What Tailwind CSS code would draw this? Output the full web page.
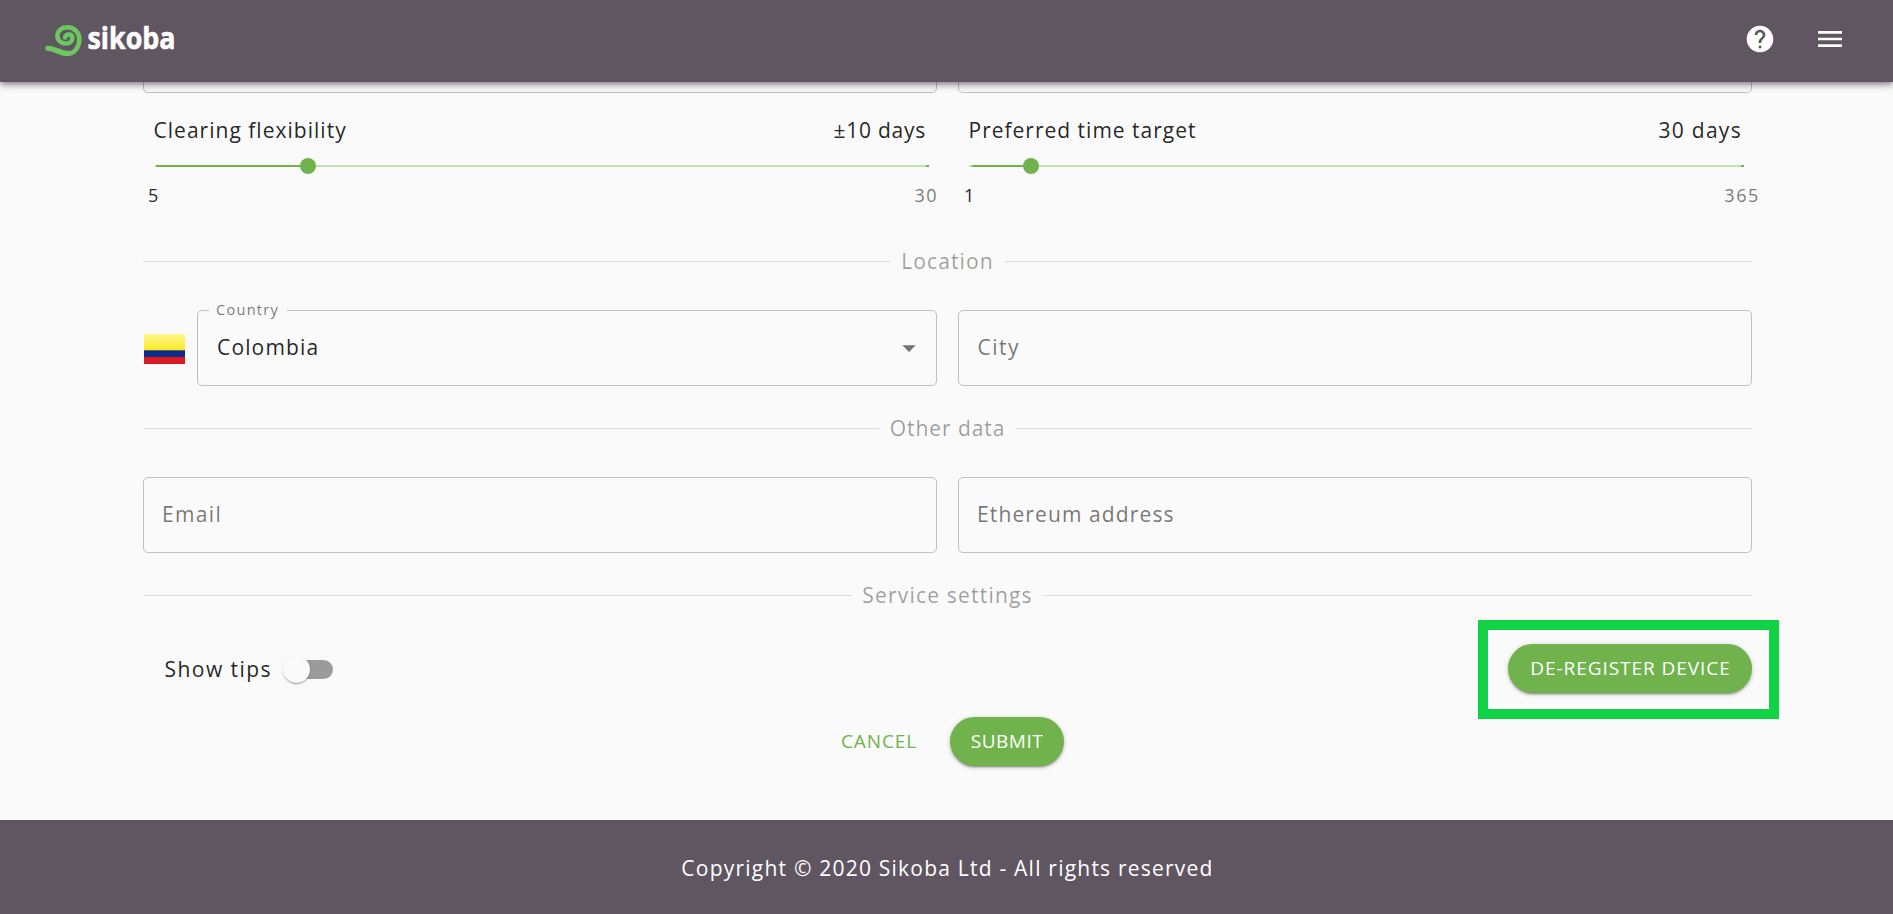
<!DOCTYPE html>
<html lang="en">
<head>
<meta charset="utf-8">
<title>Sikoba</title>
<script src="https://cdn.jsdelivr.net/npm/@tailwindcss/browser@4"></script>
</head>
<body class="bg-[#fafafa] font-['Open_Sans',sans-serif] text-[21px] leading-[30px] text-black/87 h-[914px] overflow-hidden flex flex-col whitespace-nowrap">

<header class="relative z-10 h-[82px] shrink-0 bg-[#605662] flex items-center justify-between pl-[44px] pr-[47px] shadow-[0_2px_4px_-1px_rgba(0,0,0,.2),0_4px_5px_0_rgba(0,0,0,.14),0_1px_10px_0_rgba(0,0,0,.3)]">
  <svg class="w-[150px] h-[50px] overflow-visible" viewBox="44 16 150 50">
    <path fill="none" stroke="#6dc75f" stroke-width="4.5" stroke-linecap="round" stroke-linejoin="round" d="M48 48.5C54 47.5 60 53.8 67.5 53.8C75 53.8 79.4 46 79.4 39.5C79.4 32 74 27.2 67.5 27.2C61 27.2 57.4 31.5 57.4 36C57.4 40.5 61.5 43.6 66 43.6C70 43.6 72.4 40.8 72.4 38C72.4 35.5 70.5 34.6 68.6 34.6C66.5 34.6 65 36 65.2 37.6"/>
    <path fill="none" stroke="#6dc75f" stroke-width="5.4" stroke-linecap="round" d="M48 48.4C54 47.8 60 53.4 67.5 53.4"/>
    <text x="87.5" y="49.4" fill="#fff" stroke="#fff" stroke-width=".6" stroke-linejoin="round" font-family="Open Sans, sans-serif" font-weight="700" font-size="31" textLength="88" lengthAdjust="spacingAndGlyphs">sikoba</text>
  </svg>
  <div class="flex items-center gap-[38px] -mt-1 text-white">
    <svg class="w-8 h-8" viewBox="0 0 24 24" fill="currentColor"><path d="M12 2C6.48 2 2 6.48 2 12s4.48 10 10 10 10-4.48 10-10S17.52 2 12 2zm1 17h-2v-2h2v2zm2.07-7.75l-.9.92C13.45 12.9 13 13.5 13 15h-2v-.5c0-1.1.45-2.1 1.17-2.83l1.24-1.26c.37-.36.59-.86.59-1.41 0-1.1-.9-2-2-2s-2 .9-2 2H8c0-2.21 1.79-4 4-4s4 1.79 4 4c0 .88-.36 1.68-.93 2.25z"/></svg>
    <svg class="w-8 h-8" viewBox="0 0 24 24" fill="currentColor"><path d="M3 18h18v-2H3v2zm0-5h18v-2H3v2zm0-7v2h18V6H3z"/></svg>
  </div>
</header>

<main class="flex-1 flex flex-col pl-[143px] pr-[141px]">
  <div class="grid grid-cols-2 gap-[21px]">
    <div class="h-[11px] border border-t-0 border-black/23 rounded-b-[5px]"></div>
    <div class="h-[11px] border border-t-0 border-black/23 rounded-b-[5px]"></div>
  </div>

  <div class="grid grid-cols-2 gap-[21px] mt-[22px]">
    <section>
      <div class="flex justify-between pl-[10.5px] pr-[11px]"><span class="tracking-[1.02px]">Clearing flexibility</span><span class="tracking-[.75px]">±10 days</span></div>
      <div class="mt-5 ml-[11.5px] mr-2 h-0.5 bg-[#c6e0b6] flex items-center">
        <div class="w-[145px] ml-[1.5px] h-0.5 shrink-0 bg-[#70b34d]"></div>
        <div class="size-4 -ml-px rounded-full shrink-0 bg-[#70b34d]"></div>
        <div class="ml-auto w-[3px] h-0.5 bg-[#70b34d]"></div>
      </div>
      <div class="mt-[15px] h-[26px] leading-[26px] text-[18px] flex justify-between pl-[5px] tracking-[1.5px]"><span>5</span><span class="text-black/54 -mr-px">30</span></div>
    </section>
    <section>
      <div class="flex justify-between pl-[10.5px] pr-[10px]"><span class="tracking-[1px]">Preferred time target</span><span class="tracking-[1.3px]">30 days</span></div>
      <div class="mt-5 ml-[11px] mr-2 h-0.5 bg-[#c6e0b6] flex items-center">
        <div class="w-[52px] ml-[3px] h-0.5 shrink-0 bg-[#70b34d]"></div>
        <div class="size-4 -ml-px rounded-full shrink-0 bg-[#70b34d]"></div>
        <div class="ml-auto w-[3px] h-0.5 bg-[#70b34d]"></div>
      </div>
      <div class="mt-[15px] h-[26px] leading-[26px] text-[18px] flex justify-between pl-[6px] tracking-[1.6px]"><span>1</span><span class="text-black/54 -mr-2">365</span></div>
    </section>
  </div>

  <div class="mt-[38px] flex items-center gap-[11px] text-black/38"><i class="h-px flex-1 bg-black/12"></i><span class="tracking-[1.1px]">Location</span><i class="h-px flex-1 bg-black/12"></i></div>

  <div class="mt-[34px] grid grid-cols-2 gap-[21px]">
    <div class="flex items-center">
      <svg class="w-[43px] h-[33px] mr-[11px] mt-[3px] shrink-0" viewBox="0 0 43 33">
        <defs><linearGradient id="y" x1="0" y1="0" x2="0" y2="1"><stop offset="0" stop-color="#fff68c"/><stop offset=".5" stop-color="#fff15c"/><stop offset="1" stop-color="#f9e616"/></linearGradient></defs>
        <rect x="1" y="1" width="41" height="17" fill="url(#y)"/>
        <rect x="1" y="17.3" width="41" height="7" fill="#0a2c8c"/>
        <rect x="1" y="24" width="41" height="7" fill="#dc1a1f"/>
      </svg>
      <div class="relative flex-1 h-[76px] border border-black/23 rounded-[5px] flex items-center justify-between pl-[19px] pr-[11px] pb-[2px]">
        <span class="absolute -top-px left-[11px] h-px w-[78px] bg-[#fafafa]"></span>
        <span class="absolute left-[18px] -top-[13px] text-[14.5px] leading-[24px] tracking-[1.3px] text-black/54">Country</span>
        <span class="tracking-[1.15px]">Colombia</span>
        <svg class="w-8 h-8 mt-px text-black/54" viewBox="0 0 24 24" fill="currentColor"><path d="M7 10l5 5 5-5z"/></svg>
      </div>
    </div>
    <div class="h-[76px] border border-black/23 rounded-[5px] flex items-center pl-[18.5px] pb-[2px] text-black/54"><span class="tracking-[1.5px]">City</span></div>
  </div>

  <div class="mt-[27px] flex items-center gap-[11px] text-black/38"><i class="h-px flex-1 bg-black/12"></i><span class="tracking-[.95px]">Other data</span><i class="h-px flex-1 bg-black/12"></i></div>

  <div class="mt-[34px] grid grid-cols-2 gap-[21px] text-black/54">
    <div class="h-[76px] border border-black/23 rounded-[5px] flex items-center pl-[18px] pb-[2px]"><span class="tracking-[1.35px]">Email</span></div>
    <div class="h-[76px] border border-black/23 rounded-[5px] flex items-center pl-[18px] pb-[2px]"><span class="tracking-[1.12px]">Ethereum address</span></div>
  </div>

  <div class="mt-[27px] flex items-center gap-[10px] text-black/38"><i class="h-px flex-1 bg-black/12"></i><span class="tracking-[1.2px]">Service settings</span><i class="h-px flex-1 bg-black/12"></i></div>

  <div class="mt-[34px] h-[49px] flex items-center justify-between">
    <div class="flex items-center pl-[21.5px]">
      <span class="tracking-[1.45px]">Show tips</span>
      <div class="ml-[13px] mt-0.5 w-[48px] h-[19px] rounded-full bg-[#9b9b9b] flex items-center">
        <div class="size-[27px] -ml-0.5 rounded-full bg-[#fafafa] shadow-[0_2px_1px_-1px_rgba(0,0,0,.2),0_1px_1px_0_rgba(0,0,0,.14),0_1px_3px_0_rgba(0,0,0,.12)]"></div>
      </div>
    </div>
    <div class="relative h-[49px]">
      <button class="block w-[244px] h-[49px] rounded-full bg-[#70b34d] text-white text-[19px] tracking-[.95px] pl-px pb-px shadow-[0_3px_1px_-2px_rgba(0,0,0,.2),0_2px_2px_0_rgba(0,0,0,.14),0_1px_5px_0_rgba(0,0,0,.2)]">DE-REGISTER DEVICE</button>
      <div class="absolute -left-[30px] -top-[24px] w-[301px] h-[99px] border-[10px] border-[#10d346]"></div>
    </div>
  </div>

  <div class="mt-6 h-[49px] flex items-center pl-[698px] text-[19px]">
    <button class="w-[76px] h-[49px] text-[#70b34d] tracking-[.9px] pb-px">CANCEL</button>
    <button class="ml-[33px] w-[114px] h-[49px] rounded-full bg-[#70b34d] text-white tracking-[.5px] pb-px shadow-[0_3px_1px_-2px_rgba(0,0,0,.2),0_2px_2px_0_rgba(0,0,0,.14),0_1px_5px_0_rgba(0,0,0,.2)]">SUBMIT</button>
  </div>
</main>

<footer class="h-[94px] shrink-0 bg-[#605662] text-white flex items-center justify-center pt-0.5 pl-0.5"><span class="tracking-[1.22px]">Copyright © 2020 Sikoba Ltd - All rights reserved</span></footer>
</body>
</html>
